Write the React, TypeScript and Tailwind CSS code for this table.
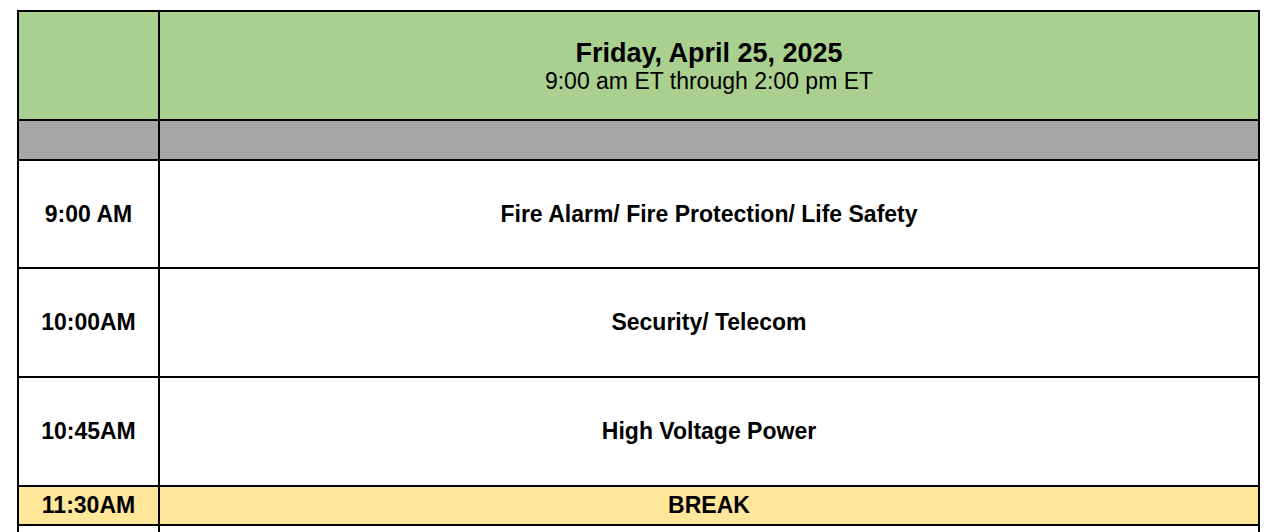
const rows = [
  { time: "9:00 AM", title: "Fire Alarm/ Fire Protection/ Life Safety", h: "h-[108px]" },
  { time: "10:00AM", title: "Security/ Telecom", h: "h-[109px]" },
  { time: "10:45AM", title: "High Voltage Power", h: "h-[109px]" },
];

export default function App() {
  return (
    <div className="h-screen overflow-hidden bg-white pt-[10px] pl-[17px] font-['Liberation_Sans',Arial,sans-serif] text-black">
      <div className="w-[1243px] border-l-2 border-t-2 border-black">
        {/* header */}
        <div className="grid h-[109px] grid-cols-[141px_1fr] bg-[#a9d08e]">
          <div className="border-b-2 border-r-2 border-black" />
          <div className="flex flex-col items-center justify-center border-b-2 border-r-2 border-black">
            <div className="text-[27px] font-bold leading-[30px]">Friday, April 25, 2025</div>
            <div className="text-[23px] leading-[26px]">9:00 am ET through 2:00 pm ET</div>
          </div>
        </div>

        {/* gray spacer row */}
        <div className="grid h-[40px] grid-cols-[141px_1fr] bg-[#a6a6a6]">
          <div className="border-b-2 border-r-2 border-black" />
          <div className="border-b-2 border-r-2 border-black" />
        </div>

        {rows.map((r) => (
          <div key={r.time} className={`grid ${r.h} grid-cols-[141px_1fr] text-[23px] font-bold`}>
            <div className="flex items-center justify-center border-b-2 border-r-2 border-black">{r.time}</div>
            <div className="flex items-center justify-center border-b-2 border-r-2 border-black">{r.title}</div>
          </div>
        ))}

        <div className="grid h-[39px] grid-cols-[141px_1fr] bg-[#ffe699] text-[23px] font-bold">
          <div className="flex items-center justify-center border-b-2 border-r-2 border-black">11:30AM</div>
          <div className="flex items-center justify-center border-b-2 border-r-2 border-black">BREAK</div>
        </div>

        <div className="grid h-[40px] grid-cols-[141px_1fr]">
          <div className="border-r-2 border-black" />
          <div className="border-r-2 border-black" />
        </div>
      </div>
    </div>
  );
}
